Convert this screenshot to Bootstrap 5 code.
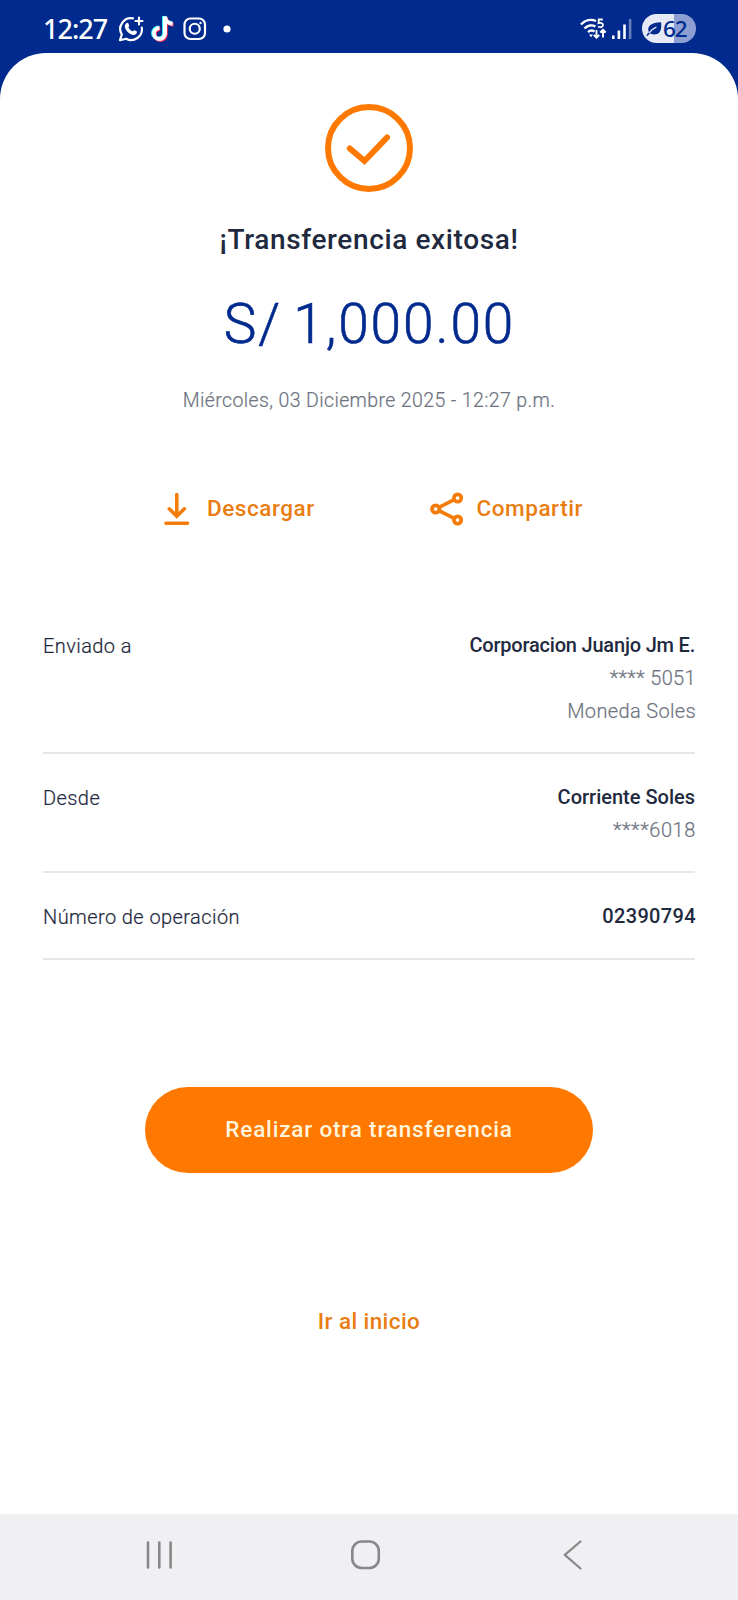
<!DOCTYPE html>
<html lang="es">
<head>
<meta charset="utf-8">
<meta name="viewport" content="width=device-width, initial-scale=1">
<title>Transferencia exitosa</title>
<link href="https://cdn.jsdelivr.net/npm/bootstrap@5.3.0/dist/css/bootstrap.min.css" rel="stylesheet">
<style>
  :root { --brand-blue: #002a8d; --brand-orange: #ff7800; --ink: #1f2a40; --muted-ink: #6d7380; }
  body { font-family: Roboto, "Liberation Sans", sans-serif; background: var(--brand-blue); color: var(--ink); }
  svg { display: block; flex: none; }
  .screen { height: 1600px; overflow: hidden; }
  .status-bar { height: 53px; padding: 4px 42px 0 43px; color: #fff; }
  .clock { font: 500 27px/1 "Noto Sans", sans-serif; letter-spacing: -1px; width: 75px; padding-bottom: 1px; }
  .icon-tiktok { margin-left: 6px; }
  .icon-instagram { margin-left: 9px; }
  .icon-dot { margin-left: 16px; }
  .battery { width: 54px; height: 29px; margin-left: 10px; border-radius: 15px; padding-left: 4px; background: linear-gradient(90deg, #e6eaf6 60%, #8d9fd2 60%); color: var(--brand-blue); font: 500 22.5px/29px "Noto Sans", sans-serif; letter-spacing: -1.2px; }
  .sheet { border-radius: 46px 46px 0 0; padding-top: 50.5px; }
  .heading { font-size: 28px; line-height: 34px; font-weight: 500; letter-spacing: .62px; margin: 31.5px 0 0; }
  .amount { font-size: 55px; line-height: 60px; font-weight: 300; letter-spacing: 1.9px; word-spacing: -4px; color: var(--brand-blue); -webkit-text-stroke: .6px var(--brand-blue); margin: 37px 0 0; padding-left: 1px; }
  .stamp { font-size: 19.5px; line-height: 30px; font-weight: 300; letter-spacing: .38px; color: var(--muted-ink); margin: 32px 0 0; }
  .stamp, .detail-sub, .detail-label { -webkit-text-stroke: .2px currentColor; }
  .actions { margin-top: 73px; padding-left: 164px; height: 40px; }
  .orange-link { color: #ea7d12; font-size: 22.5px; font-weight: 500; letter-spacing: .55px; text-decoration: none; }
  .orange-link:hover { color: #c96405; }
  .action-download { width: 266px; gap: 17px; }
  .action-share { gap: 12.5px; }
  .details { margin: 100px 43px 0; font-size: 20px; line-height: 33px; }
  .detail-row { border-bottom: 2px solid #e6e6e8; padding-bottom: 24px; margin-bottom: 27px; }
  .detail-row:last-child { padding-bottom: 25px; }
  .detail-label { font-weight: 300; letter-spacing: .42px; padding-top: 1px; height: 33px; }
  .detail-value { font-weight: 500; }
  .detail-sub { font-weight: 300; color: var(--muted-ink); letter-spacing: .35px; margin-right: -1px; }
  .tight { letter-spacing: -.2px; }
  .wide { letter-spacing: .6px; }
  .digits { letter-spacing: .35px; margin-right: -1px; }
  .btn-orange { --bs-btn-bg: var(--brand-orange); --bs-btn-color: #fff4dc; --bs-btn-hover-bg: #ea6d00; --bs-btn-hover-color: #fff; width: 448px; height: 86px; margin-top: 99.5px; padding-top: 7px; font-size: 22.5px; font-weight: 500; letter-spacing: .82px; border: 0; }
  .home-link { margin-top: 133.5px; line-height: 30px; letter-spacing: .4px; }
  .nav-keys { height: 86px; background: #f0f0f2; padding: 0 155px 4px 145px; }
  .key-home { margin-left: 177px; }
</style>
</head>
<body>
<div class="screen d-flex flex-column">
  <header class="status-bar d-flex align-items-center">
    <span class="clock">12:27</span>
    <svg width="26" height="26" viewBox="0 0 26 26" fill="none" stroke="#fff" stroke-width="2.2" stroke-linecap="round" stroke-linejoin="round"><path d="M15 2.3A10.8 10.8 0 0 0 3.800 18.5L2 24.2l6-1.500A10.8 10.8 0 0 0 23.8 11.5M21 1.500v7M17.500 5h7"/><path d="M8.300 7.200c.8-.8 1.700-.6 2.100.3l.8 1.900c.3.700-.9 1.500-.7 2 .8 1.800 2.200 3.200 4 3.900.7.200 1.200-1.300 2-1l2 1c1.300.7-.3 3.600-2.700 3.600-4.600-.2-9.300-5.200-9-9.200.1-1 .7-1.800 1.500-2.500z" fill="#fff" stroke="none"/></svg>
    <svg class="icon-tiktok" width="24" height="27" viewBox="0 0 24 27"><g fill="none" stroke-width="4"><path d="M14 1v17a5.500 5.500 0 1 1-5.500-5.500M14 1c.4 4 3.500 7 8 7.300" stroke="#25f4ee"/><path d="M15.800 2.500v17a5.500 5.500 0 1 1-5.500-5.500M15.800 2.500c.4 4 3.500 7 7.700 7.300" stroke="#fe2c55"/><path d="M15 1.500v17A5.500 5.500 0 1 1 9.500 13M15 1.500c.4 4 3.500 7 7.700 7.300" stroke="#fff"/></g></svg>
    <svg class="icon-instagram" width="24" height="24" viewBox="0 0 24 24" fill="none" stroke="#fff" stroke-width="2.2"><rect x="1.5" y="1.5" width="20.5" height="20.5" rx="6"/><circle cx="11.75" cy="11.75" r="5"/><circle cx="17.5" cy="6" r="1.2" fill="#fff" stroke="none"/></svg>
    <svg class="icon-dot" width="8" height="8"><circle cx="4" cy="4" r="3.6" fill="#fff"/></svg>
    <svg class="ms-auto me-1" width="28" height="24" viewBox="0 0 28 24" fill="none" stroke="#fff" stroke-width="2.4"><path d="M1 7.500C5 3 11 1.800 16 4M4.500 11.500c3-3.200 7.500-4 11-2M8 15c2-1.600 4.500-1.800 6.500-.5"/><path d="M9 17.500h4l-2 2.800z" fill="#fff" stroke="none"/><path d="M22.800 2.500h-4l-.3 3.700c2-.6 4.500-.3 4.500 1.800 0 2.200-3 2.700-5 1.500" stroke-width="1.8"/><path d="M16.500 13v7.500M13.800 18l2.700 2.700 2.700-2.700M23 20.500V13M20.300 15.500L23 12.800l2.700 2.700" stroke-width="1.9"/></svg>
    <svg width="20" height="22" viewBox="0 0 20 22" fill="#fff"><path d="M0 17.500h2.600V21H0zM5.600 12.500h2.600V21H5.600zM11.200 6.500h2.600V21h-2.600z"/><path d="M16.800 1h2.600v20h-2.600z" opacity=".4"/></svg>
    <div class="battery d-flex align-items-center">
      <svg width="17" height="16" viewBox="0 0 18 16"><path d="M16 .8c.8 8-1 13-7.500 13-1.800 0-3-.5-4-1.200L1.500 15.500.3 14.600 3 11.300C.5 5 5.500 1 16 .8z" fill="#002a8d"/><path d="M3 12.300C5.500 9 8 7.300 11 6" stroke="#e6eaf6" stroke-width="1.2" fill="none"/></svg><span>62</span>
    </div>
  </header>
  <main class="sheet bg-white flex-grow-1 d-flex flex-column align-items-center text-center">
    <svg width="88" height="88" viewBox="0 0 88 88" fill="none" stroke="#ff7800" stroke-width="6"><circle cx="44" cy="44" r="41"/><path d="M24.800 44.500L39.500 57 62 33.500" stroke-linecap="round"/></svg>
    <h1 class="heading">¡Transferencia exitosa!</h1>
    <p class="amount">S/ 1,000.00</p>
    <p class="stamp">Miércoles, 03 Diciembre 2025 - 12:27 p.m.</p>
    <div class="actions align-self-stretch d-flex align-items-center">
      <a href="#" class="orange-link action-download d-flex align-items-center">
        <svg width="26" height="34" viewBox="0 0 26 34" fill="none" stroke="#f57c0a" stroke-width="3.6" stroke-linecap="round"><path d="M12.800 2.500v21M5.200 16.800l7.600 7.400 7.600-7.400M2 31.300h21.500"/></svg>
        <span>Descargar</span></a>
      <a href="#" class="orange-link action-share d-flex align-items-center">
        <svg width="34" height="34" viewBox="0 0 34 34" fill="none" stroke="#f57c0a" stroke-width="3.7"><circle cx="5.7" cy="17" r="3.7"/><circle cx="27.6" cy="6" r="3.7"/><circle cx="27.6" cy="28" r="3.7"/><path d="M9 15.300L24.200 7.700M9 18.700l15.200 7.600"/></svg>
        <span>Compartir</span></a>
    </div>
    <section class="details align-self-stretch">
      <div class="detail-row d-flex justify-content-between">
        <span class="detail-label">Enviado a</span>
        <div class="text-end">
          <div class="detail-value tight">Corporacion Juanjo Jm E.</div>
          <div class="detail-sub">**** 5051</div>
          <div class="detail-sub">Moneda Soles</div>
        </div>
      </div>
      <div class="detail-row d-flex justify-content-between">
        <span class="detail-label">Desde</span>
        <div class="text-end">
          <div class="detail-value">Corriente Soles</div>
          <div class="detail-sub wide">****6018</div>
        </div>
      </div>
      <div class="detail-row d-flex justify-content-between">
        <span class="detail-label">Número de operación</span>
        <span class="detail-value digits">02390794</span>
      </div>
    </section>
    <button type="button" class="btn btn-orange rounded-pill">Realizar otra transferencia</button>
    <a href="#" class="orange-link home-link">Ir al inicio</a>
  </main>
  <nav class="nav-keys d-flex align-items-center">
    <svg width="29" height="30" viewBox="0 0 29 30" stroke="#88888a" stroke-width="2.6" stroke-linecap="round"><path d="M3 2.500v25M14.300 2.500v25M25.600 2.500v25"/></svg>
    <svg class="key-home" width="30" height="30" viewBox="0 0 30 30" fill="none" stroke="#88888a" stroke-width="2.6"><rect x="1.3" y="1.5" width="26.5" height="26.5" rx="9.5"/></svg>
    <svg class="ms-auto" width="20" height="30" viewBox="0 0 20 30" fill="none" stroke="#88888a" stroke-width="2.2" stroke-linecap="round" stroke-linejoin="round"><path d="M17.500 1.500L1.800 14.800l15.700 13.700"/></svg>
  </nav>
</div>
<script src="https://cdn.jsdelivr.net/npm/bootstrap@5.3.0/dist/js/bootstrap.bundle.min.js"></script>
</body>
</html>
